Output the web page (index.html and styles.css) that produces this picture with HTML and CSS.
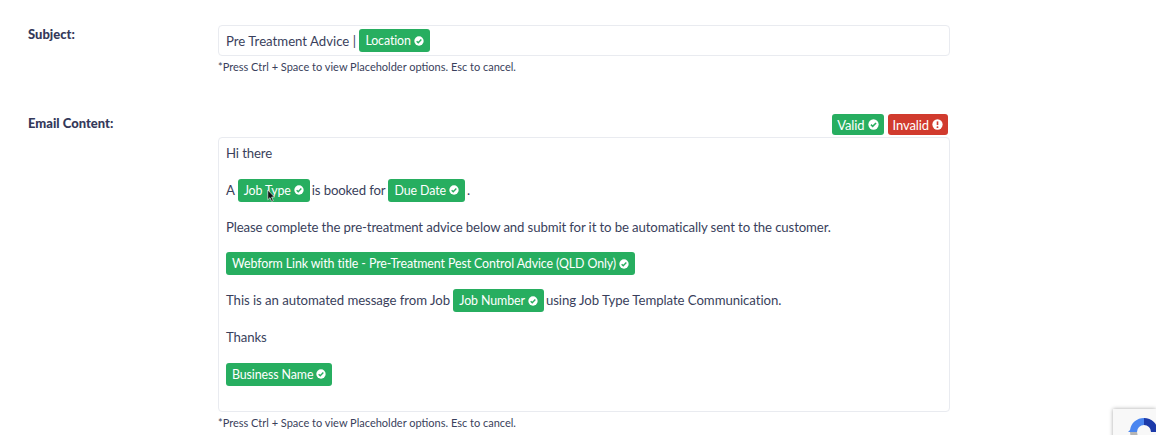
FILE: index.html
```html
<!DOCTYPE html>
<html lang="en">
<head>
<meta charset="utf-8">
<title>Pre Treatment Advice</title>
<link rel="stylesheet" href="styles.css">
</head>
<body>
<svg class="defs" width="0" height="0" aria-hidden="true">
  <symbol id="ok" viewBox="0 0 12 12"><circle cx="6" cy="6" r="5.6" fill="#fff"/><path d="M3.2 6.2 5.1 8 8.8 4.3" fill="none" stroke="#27ae60" stroke-width="1.7"/></symbol>
  <symbol id="bad" viewBox="0 0 12 12"><circle cx="6" cy="6" r="5.6" fill="#fff"/><path d="M6 2.6V6.6" stroke="#d13b2e" stroke-width="1.8"/><circle cx="6" cy="8.9" r="1.05" fill="#d13b2e"/></symbol>
</svg>
<main class="page">
  <section class="row">
    <div class="label">Subject:</div>
    <div class="field">
      <div class="input">Pre Treatment Advice | <span class="tag">Location<svg class="ic"><use href="#ok"/></svg></span></div>
      <p class="hint">*Press Ctrl + Space to view Placeholder options. Esc to cancel.</p>
    </div>
  </section>
  <section class="row row-email">
    <div class="label">Email Content:</div>
    <div class="field">
      <div class="legend">
        <span class="tag">Valid<svg class="ic"><use href="#ok"/></svg></span>
        <span class="tag tag-red">Invalid<svg class="ic"><use href="#bad"/></svg></span>
      </div>
      <div class="editor">
        <p>Hi there</p>
        <p>A <span class="tag tag-pointer">Job Type<svg class="ic"><use href="#ok"/></svg><svg class="cursor" viewBox="0 0 12 18"><path d="M1 1V14L4 11.2 6.2 16.2 8.4 15.2 6.2 10.4H10Z" fill="#111" stroke="#fff" stroke-width=".8"/></svg></span><span class="after">is booked for</span> <span class="tag">Due Date<svg class="ic"><use href="#ok"/></svg></span><span class="after">.</span></p>
        <p>Please complete the pre-treatment advice below and submit for it to be automatically sent to the customer.</p>
        <p><span class="tag">Webform Link with title - Pre-Treatment Pest Control Advice (QLD Only)<svg class="ic"><use href="#ok"/></svg></span></p>
        <p class="loose">This is an automated message from Job <span class="tag">Job Number<svg class="ic"><use href="#ok"/></svg></span><span class="after">using Job Type Template Communication.</span></p>
        <p>Thanks</p>
        <p><span class="tag">Business Name<svg class="ic"><use href="#ok"/></svg></span></p>
      </div>
      <p class="hint">*Press Ctrl + Space to view Placeholder options. Esc to cancel.</p>
    </div>
  </section>
</main>
<div class="recaptcha" aria-hidden="true">
  <svg class="recaptcha-logo" viewBox="0 0 32 32"><path d="M2 14A14 14 0 0 1 16 2V9A7 7 0 0 0 9 16H0L3.5 12.5Z" fill="#4a86f0"/><path d="M16 2A14 14 0 0 1 30 16H23A7 7 0 0 0 16 9Z" fill="#1c3aa9"/><path d="M9 16A7 7 0 0 0 16 23V30A14 14 0 0 1 2 16Z" fill="#b5b5b5"/></svg>
</div>
</body>
</html>
```
FILE: styles.css
```css
* { box-sizing: border-box; }
html, body { margin: 0; height: 435px; overflow: hidden; background: #fff; }
body { font-family: "Lato", "Liberation Sans", sans-serif; font-size: 13.2px; letter-spacing: -0.12px; color: #3a3f5c; }
.defs { position: absolute; }
.page { padding: 25px 206px 0 28px; }
.row { display: grid; grid-template-columns: 190px 732px; }
.row-email { margin-top: 40px; }
.label { font-weight: 900; font-size: 13px; letter-spacing: 0; color: #34395a; padding-top: 1px; line-height: 16px; }
.input { height: 31px; border: 1px solid #e9ebf0; border-radius: 4px; padding: 0 7px; display: flex; align-items: center; white-space: pre; letter-spacing: 0; }
.hint { margin: 4px 0 0; font-size: 11px; letter-spacing: 0; line-height: 14px; color: #3a3f5c; }
.tag { display: inline-flex; align-items: center; height: 23px; padding: 0 6px; border-radius: 3px; background: #27ae60; color: #fff; font-size: 12.4px; letter-spacing: -0.1px; white-space: nowrap; vertical-align: top; position: relative; }
.tag-red { background: #d13b2e; }
.ic { width: 10px; height: 10px; margin-left: 3px; flex: none; }
.cursor { position: absolute; left: 29px; top: 10px; width: 9px; height: 14px; }
.after { margin-left: 2px; }
.legend { display: flex; justify-content: flex-end; gap: 4px; height: 21px; margin: 0 2px 2px 0; }
.legend .tag { height: 21px; padding: 0 5px; font-size: 13px; }
.legend .ic { width: 11px; height: 11px; margin-left: 3px; }
.editor { height: 275px; border: 1px solid #e9ebf0; border-radius: 4px; padding: 4px 7px; }
.editor p { margin: 0 0 13.8px; height: 23px; line-height: 23px; white-space: nowrap; }
.editor .loose { letter-spacing: -0.06px; }
.recaptcha { position: fixed; right: 0; top: 409px; width: 43px; height: 30px; background: #f8f8f8; box-shadow: 0 0 4px rgba(0,0,0,.35); overflow: hidden; }
.recaptcha-logo { position: absolute; left: 15px; top: 7px; width: 32px; height: 32px; }
```
